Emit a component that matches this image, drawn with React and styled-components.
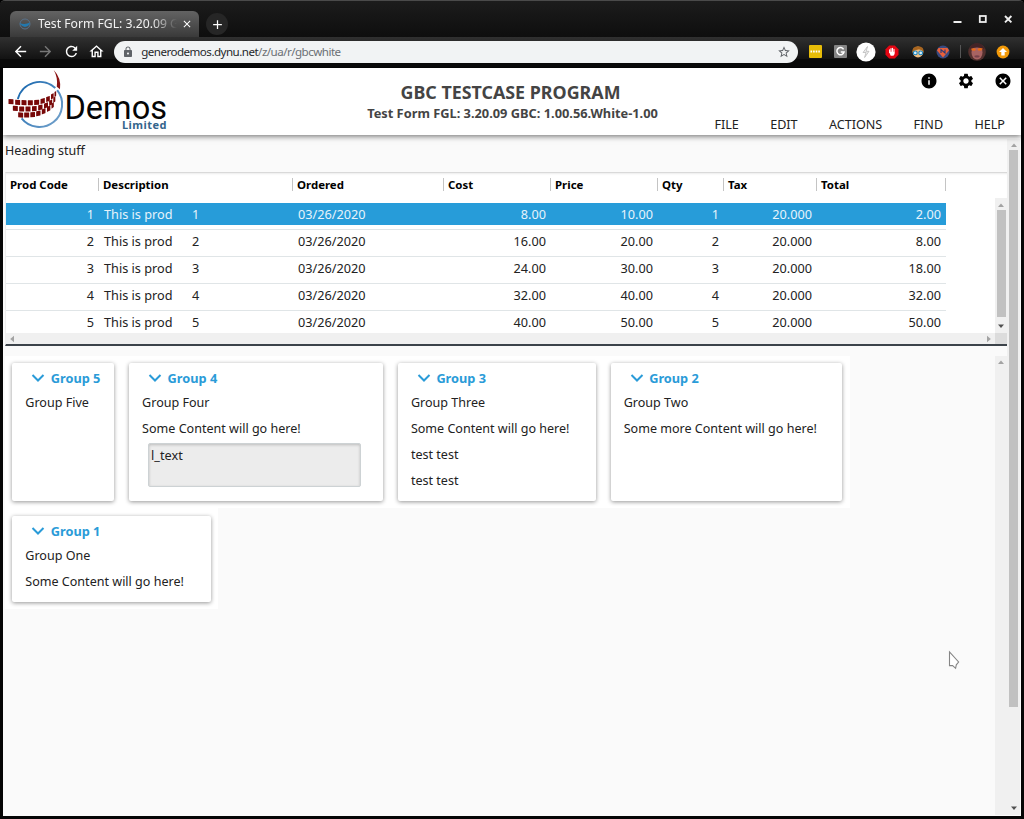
import React from "react";
import styled, { createGlobalStyle, css } from "styled-components";
import {
  MdArrowBack, MdArrowForward, MdRefresh, MdOutlineHome, MdLock, MdStarBorder,
  MdInfo, MdSettings, MdCancel, MdClose, MdAdd,
} from "react-icons/md";

const GlobalStyle = createGlobalStyle`
  * { box-sizing: border-box; }
  html, body { margin: 0; background: #000; overflow: hidden; }
  body { font-family: "Noto Sans", "Open Sans", sans-serif; font-size: 12.7px; color: #222; }
`;

const Window = styled.div`
  width: 1024px;
  height: 819px;
  display: flex;
  flex-direction: column;
  background: #050505;
  border-top: 1px solid #4a4a4a;
  border-radius: 5px 5px 0 0;
  overflow: hidden;
`;

/* ---------- browser frame ---------- */

const TitleBar = styled.div`
  height: 36px;
  flex: none;
  display: flex;
  align-items: flex-end;
  padding: 0 0 0 10px;
  background: linear-gradient(#1c1c1c, #0e0e0e);
`;

const Tab = styled.div`
  width: 189px;
  height: 26px;
  display: flex;
  align-items: center;
  padding: 0 6px 0 8px;
  border-radius: 6px 6px 0 0;
  background: linear-gradient(#636363, #3a3a3a);
`;

const TabTitle = styled.div`
  width: 139px;
  margin-left: 6px;
  overflow: hidden;
  white-space: nowrap;
  font-size: 12.2px;
  line-height: 20px;
  color: #f2f2f2;
  mask-image: linear-gradient(90deg, #000 82%, transparent 100%);
`;

const TabClose = styled(MdClose)`
  margin-left: auto;
  color: #fff;
  font-size: 12px;
`;

const NewTab = styled.div`
  width: 22px;
  height: 22px;
  margin: 0 0 2px 7px;
  border-radius: 50%;
  background: #262626;
  color: #fff;
  display: grid;
  place-items: center;
  font-size: 15px;
`;

const WindowControls = styled.div`
  display: flex;
  align-items: center;
  margin: 0 10px 8px auto;
  gap: 16px;
  height: 20px;
`;

const Toolbar = styled.div`
  height: 30px;
  flex: none;
  display: flex;
  align-items: center;
  padding: 0 12px 1px;
  background: linear-gradient(#303030, #131313 72%, #0a0a0a 74%);
`;

const NavButton = styled.div`
  width: 25.3px;
  height: 22px;
  display: flex;
  align-items: center;
  font-size: 17px;
  color: ${(p) => (p.$dim ? "#777" : "#fff")};
`;

const AddressBar = styled.div`
  width: 684px;
  height: 22px;
  margin-left: 1px;
  padding: 0 7px 0 8px;
  display: flex;
  align-items: center;
  border-radius: 11px;
  background: #f1f3f4;
  color: #5f6368;
  font-size: 12px;
`;

const Url = styled.span`
  margin-left: 7px;
  font-size: 11.6px;
  letter-spacing: -0.53px;
  color: #6b7075;
  b { font-weight: 400; color: #26282b; }
`;

const Star = styled(MdStarBorder)`
  margin-left: auto;
  font-size: 14px;
`;

const Extensions = styled.div`
  flex: 1;
  display: flex;
  align-items: center;
  justify-content: space-between;
  padding: 0 0 0 7px;
  margin-right: -1px;
`;

const ExtSlot = styled.div`
  width: ${(p) => p.$w || 20}px;
  display: grid;
  place-items: center;
`;

/* ---------- page ---------- */

const Page = styled.div`
  flex: 1;
  min-height: 0;
  margin: 1px 3px 3px;
  display: flex;
  flex-direction: column;
  background: #fafafa;
`;

const Header = styled.header`
  height: 67px;
  flex: none;
  display: grid;
  grid-template-columns: 330px 357px 1fr;
  background: #fff;
  position: relative;
  box-shadow: 0 1px 6px rgba(0, 0, 0, 0.6);
`;

const Titles = styled.div`
  text-align: center;
  color: #444;
  font-weight: 700;
  white-space: nowrap;
  padding: 12px 0 0 2px;
`;

const Title = styled.div`
  margin-left: -4px;
  font-size: 17.85px;
  line-height: 24px;
`;

const Subtitle = styled.div`
  font-size: 12.82px;
  line-height: 18px;
`;

const HeaderActions = styled.div`
  display: flex;
  flex-direction: column;
  align-items: flex-end;
  justify-content: space-between;
  padding: 4px 10px 0 0;
`;

const ActionIcons = styled.div`
  display: flex;
  gap: 19px;
  margin-right: -0.5px;
  font-size: 18px;
  color: #000;
  svg { display: block; }
`;

const Menu = styled.nav`
  display: flex;
  gap: 31.3px;
  padding-right: 6px;
  line-height: 20px;
  font-size: 12.6px;
  color: #222;
`;

const Main = styled.div`
  flex: 1;
  min-height: 0;
  display: flex;
`;

const Content = styled.div`
  width: 1004px;
  padding-left: 2px;
  display: flex;
  flex-direction: column;
`;

const Heading = styled.div`
  height: 37px;
  padding-top: 7px;
  line-height: 18px;
  font-size: 12.5px;
`;

/* ---------- table ---------- */

const TableFrame = styled.section`
  height: 174px;
  flex: none;
  display: flex;
  flex-direction: column;
  background: #fff;
  border-top: 1px solid #d9d9d9;
  border-bottom: 2px solid #3c434a;
  border-left: 1px solid #eee;
  box-shadow: inset 0 2px 2px -1px rgba(0, 0, 0, 0.08);
`;

const TableTop = styled.div`
  height: 160px;
  display: flex;
`;

const TableGrid = styled.div`
  width: 989px;
  height: 160px;
  overflow: hidden;
`;

const columns = css`
  display: grid;
  width: 940px;
  grid-template-columns: 93px 194px 151px 107px 107px 66px 93px 129px;
`;

const HeadRow = styled.div`
  ${columns}
  height: 30px;
  padding-top: 5px;
`;

const HeadCell = styled.div`
  height: 13px;
  padding-left: 4px;
  display: flex;
  align-items: center;
  border-right: 1px solid #c4c4c4;
  font-size: 11.45px;
  font-weight: 700;
  color: #000;
`;

const Row = styled.div`
  ${columns}
  height: 27px;
  padding-bottom: 4px;
  border-bottom: 1px solid #e0e5e7;
  line-height: 22px;
  color: ${(p) => (p.$selected ? "#e6f3fb" : "#222")};
`;

const Cell = styled.div`
  height: 22px;
  padding: 0 5px;
  text-align: ${(p) => (p.$right ? "right" : "left")};
  white-space: pre;
  background: ${(p) => (p.$selected ? "#279cd9" : "transparent")};
`;

const ProdNumber = styled.span`
  margin-left: 19.5px;
`;

/* ---------- scrollbars ---------- */

const VTrack = styled.div`
  width: ${(p) => p.$w}px;
  height: ${(p) => p.$h}px;
  flex: none;
  margin-top: ${(p) => p.$top || 0}px;
  display: flex;
  flex-direction: column;
  align-items: center;
  background: #f0f0f0;
  padding: ${(p) => p.$pad || "4px 0"};
`;

const Thumb = styled.div`
  width: 9px;
  height: ${(p) => p.$h}px;
  margin-top: ${(p) => p.$gap}px;
  background: #c1c1c1;
`;

const ArrowSvg = styled.svg`
  display: block;
  flex: none;
  fill: ${(p) => (p.$dark ? "#505050" : "#a3a3a3")};
  margin-top: ${(p) => (p.$end ? "auto" : 0)};
`;

const HTrack = styled.div`
  height: 11px;
  display: flex;
  align-items: center;
  justify-content: space-between;
  padding-left: 3px;
  background: #f0f0f0;
`;

const Corner = styled.div`
  width: 12px;
  height: 11px;
  margin-left: 3px;
  background: #dcdcdc;
`;

const HEnd = styled.div`
  display: flex;
  align-items: center;
`;

/* ---------- groups ---------- */

const Lower = styled.div`
  flex: 1;
  min-height: 0;
  display: flex;
  margin-top: 10px;
`;

const GroupArea = styled.div`
  width: 990px;
  display: flex;
  flex-direction: column;
  align-items: flex-start;
`;

const GroupRow = styled.div`
  display: flex;
  gap: 14.8px;
  height: ${(p) => p.$h}px;
  padding: ${(p) => p.$top}px 7.5px 7px 7.3px;
  background: #fff;
`;

const Card = styled.article`
  width: ${(p) => p.$w}px;
  padding: 6px 0 0 13px;
  background: #fff;
  border-radius: 2px;
  box-shadow: 0 1px 4px rgba(0, 0, 0, 0.42);
`;

const CardTitle = styled.div`
  height: 17px;
  padding-left: 6px;
  display: flex;
  align-items: center;
  gap: 5.5px;
  font-weight: 700;
  font-size: 12.75px;
  color: #2a9bd8;
`;

const Line = styled.div`
  height: 26px;
  line-height: 26px;
  font-size: 12.55px;
  margin-top: ${(p) => (p.$first ? "4px" : 0)};
`;

const TextArea = styled.div`
  width: 213px;
  height: 44px;
  margin: 1px 0 0 6px;
  padding: 2px;
  line-height: 18px;
  background: #ececec;
  border: 1px solid #cdd2d4;
  border-radius: 2px;
  box-shadow: inset 0 1px 3px rgba(0, 0, 0, 0.2);
`;

const Pointer = styled.svg`
  position: absolute;
  left: 947px;
  top: 650px;
`;

const Arrow = ({ dir, dark, end }) => {
  const d = { up: "M1 5 L4 1.5 L7 5Z", down: "M1 1.5 L7 1.5 L4 5Z" }[dir];
  const h = { left: "M5 0.8 L5 7.2 L1.2 4Z", right: "M1 0.8 L1 7.2 L4.8 4Z" }[dir];
  return d ? (
    <ArrowSvg width="8" height="6" $dark={dark} $end={end}><path d={d} /></ArrowSvg>
  ) : (
    <ArrowSvg width="6" height="8" $dark={dark}><path d={h} /></ArrowSvg>
  );
};

const tiles = [
  [33, 107, 15, 3], [53, 109, 15, 4], [72, 110, 15, 2], [91, 110, 15, 0], [110, 109, 15, -5], [128, 105, 13, -12], [144, 99, 11, -20], [157, 91, 8, -28], [166, 84, 5, -34],
  [46, 127, 15, 4], [65, 129, 15, 3], [84, 129, 15, 0], [103, 128, 14, -5], [121, 124, 13, -12], [138, 118, 12, -20], [152, 110, 9, -28], [163, 101, 6, -34],
  [62, 147, 15, 4], [80, 147, 15, 0], [98, 146, 14, -4], [115, 142, 13, -12], [131, 136, 11, -20], [146, 128, 10, -28], [158, 118, 7, -34],
];

const LogoSvg = styled.svg`display: block;`;

const Logo = () => (
  <LogoSvg width="180" height="67" viewBox="3 68 180 67">
    <defs>
      <linearGradient id="ring" x1="0" y1="0" x2="1" y2="0.8">
        <stop offset="0" stopColor="#1565ad" />
        <stop offset="1" stopColor="#6f9fca" />
      </linearGradient>
    </defs>
    <path d="M17.8 99 A22.7 22.7 0 0 1 55.3 88.1 M57.2 90.1 A22.7 22.7 0 1 1 21.6 118.4"
      fill="none" stroke="url(#ring)" strokeWidth="2" />
    <path d="M53.7 70 Q61.5 78 60 89.3 L56.8 86.7 Q58.2 78 53.7 70Z" fill="#8b1414" />
    <g transform="translate(0 66) scale(0.3333)" fill="#780808">
      {tiles.map(([x, y, s, a]) => (
        <rect key={`${x}-${y}`} x={-s / 2} y={-7.5} width={s} height="15" rx="1"
          transform={`translate(${x} ${y}) skewY(${a})`} />
      ))}
    </g>
    <text x="64.5" y="118.5" fontFamily="Roboto, sans-serif" fontSize="32.5" textLength="102.5" fill="#050505">Demos</text>
    <text x="122" y="128.5" fontFamily="Noto Sans, sans-serif" fontWeight="700" fontSize="11" textLength="44.5" fill="#34658c">Limited</text>
  </LogoSvg>
);

const Controls = () => (
  <WindowControls>
    <svg width="64" height="20" viewBox="950 9 64 20" stroke="#eee" fill="none">
      <path d="M953.5 22H961.5" strokeWidth="1.8" />
      <rect x="979.8" y="16" width="6" height="6" strokeWidth="1.8" />
      <path d="M1005 16L1011.4 22.4M1011.4 16L1005 22.4" strokeWidth="1.9" />
    </svg>
  </WindowControls>
);

const ExtensionIcons = () => (
  <Extensions>
    <ExtSlot><svg width="13" height="13"><rect width="13" height="13" rx="1" fill="#e8bd08" /><path d="M1.5 6.5H11" stroke="#fff" strokeWidth="2" strokeDasharray="1.6 1" /></svg></ExtSlot>
    <ExtSlot><svg width="13" height="13"><rect width="13" height="13" rx="1" fill="#858585" /><path d="M9.6 4.3A3.6 3.6 0 1 0 10 7H6.8" stroke="#fff" strokeWidth="1.5" fill="none" /></svg></ExtSlot>
    <ExtSlot><svg width="20" height="20"><circle cx="10" cy="10" r="9.6" fill="#fff" /><path d="M11.5 4.5L7 10.5H10L8.6 15.5L13 9.3H10.2Z" fill="#eee" stroke="#bbb" strokeWidth="0.8" /></svg></ExtSlot>
    <ExtSlot><svg width="14" height="14"><path d="M4.2 0.5H9.8L13.5 4.2V9.8L9.8 13.5H4.2L0.5 9.8V4.2Z" fill="#e30613" /><path d="M4.6 7.5V4.8M6 7V3.5M7.5 7V3.2M9 7V4.4" stroke="#fff" strokeWidth="1.1" strokeLinecap="round" /><path d="M4 6.8H9.6V9L8.5 10.8H5.7Z" fill="#fff" /></svg></ExtSlot>
    <ExtSlot><svg width="12" height="12"><circle cx="6" cy="6" r="5.4" fill="#efbd80" /><path d="M0.3 6.5Q0 0.3 6 0.3Q12 0.3 11.7 6.5Q10 3.2 7 3.4Q3 3.2 0.3 6.5Z" fill="#a8651f" /><circle cx="3.3" cy="6.9" r="1.9" fill="#d5f0fc" stroke="#1783c0" strokeWidth="1.1" /><circle cx="8.7" cy="6.9" r="1.9" fill="#d5f0fc" stroke="#1783c0" strokeWidth="1.1" /></svg></ExtSlot>
    <ExtSlot><svg width="14" height="14"><circle cx="7" cy="7" r="6.5" fill="#394a80" /><path d="M2.5 3H11.5L13 5.5L7 12.5L1 5.5Z" fill="#e8603a" /><path d="M5 8V4.6L9 8V4.6" stroke="#263b7b" strokeWidth="1.1" fill="none" /></svg></ExtSlot>
    <ExtSlot $w={3}><svg width="1" height="13"><rect width="1" height="13" fill="#555" /></svg></ExtSlot>
    <ExtSlot>
      <svg width="18" height="18"><circle cx="9" cy="9" r="8.8" fill="#53302e" /><ellipse cx="9" cy="9.5" rx="5.5" ry="7" fill="#a86362" /><path d="M1.5 6Q3 0.3 9 0.3Q15 0.3 16.5 6Q9 3 1.5 6Z" fill="#432326" /><path d="M3 5.8Q5.5 4.4 8 6L7 7.8L4 7.6ZM9.4 6Q12 4 14.8 5.6L13.5 7.6L10.5 7.8Z" fill="#e86a18" /><path d="M6 13Q9 11.5 12 13L10.5 14.5H7.5Z" fill="#77424a" /></svg>
    </ExtSlot>
    <ExtSlot><svg width="14" height="14"><circle cx="7" cy="7" r="6.4" fill="#f39a08" /><path d="M7 3L11 7H8.7V10.4H5.3V7H3Z" fill="#fff" /></svg></ExtSlot>
  </Extensions>
);

const heads = ["Prod Code", "Description", "Ordered", "Cost", "Price", "Qty", "Tax", "Total"];
const rows = [
  ["1", "8.00", "10.00", "2.00"],
  ["2", "16.00", "20.00", "8.00"],
  ["3", "24.00", "30.00", "18.00"],
  ["4", "32.00", "40.00", "32.00"],
  ["5", "40.00", "50.00", "50.00"],
];

const ProductRow = ({ data, selected }) => {
  const [n, cost, price, total] = data;
  return (
    <Row $selected={selected}>
      <Cell $right $selected={selected}>{n}</Cell>
      <Cell $selected={selected}>This is prod<ProdNumber>{n}</ProdNumber></Cell>
      <Cell $selected={selected}>03/26/2020</Cell>
      {[cost, price, n, "20.000", total].map((v, i) => (
        <Cell key={i} $right $selected={selected}>{v}</Cell>
      ))}
    </Row>
  );
};

const Group = ({ width, title, lines, field }) => (
  <Card $w={width}>
    <CardTitle>
      <svg width="14" height="10" viewBox="0 0 14 10"><path d="M1.5 2L7 7.5L12.5 2" fill="none" stroke="#2a9bd8" strokeWidth="2" /></svg>
      {title}
    </CardTitle>
    {lines.map((l, i) => <Line key={i} $first={i === 0}>{l}</Line>)}
    {field && <TextArea>{field}</TextArea>}
  </Card>
);

export default function App() {
  return (
    <>
      <GlobalStyle />
      <Window>
        <TitleBar>
          <Tab>
            <svg width="14" height="14"><circle cx="7" cy="7" r="5" fill="none" stroke="#58718a" strokeWidth="1" /><path d="M1.5 6Q7 8 12 5.5Q11 9.5 7 10Q3.5 9.5 1.5 6Z" fill="#2378ad" /></svg>
            <TabTitle>Test Form FGL: 3.20.09 GBC</TabTitle>
            <TabClose />
          </Tab>
          <NewTab><MdAdd /></NewTab>
          <Controls />
        </TitleBar>
        <Toolbar>
          <NavButton><MdArrowBack /></NavButton>
          <NavButton $dim><MdArrowForward /></NavButton>
          <NavButton><MdRefresh /></NavButton>
          <NavButton><MdOutlineHome /></NavButton>
          <AddressBar>
            <MdLock />
            <Url><b>generodemos.dynu.net</b>/z/ua/r/gbcwhite</Url>
            <Star />
          </AddressBar>
          <ExtensionIcons />
        </Toolbar>
        <Page>
          <Header>
            <Logo />
            <Titles>
              <Title>GBC TESTCASE PROGRAM</Title>
              <Subtitle>Test Form FGL: 3.20.09 GBC: 1.00.56.White-1.00</Subtitle>
            </Titles>
            <HeaderActions>
              <ActionIcons><MdInfo /><MdSettings /><MdCancel /></ActionIcons>
              <Menu>
                {["FILE", "EDIT", "ACTIONS", "FIND", "HELP"].map((m) => <span key={m}>{m}</span>)}
              </Menu>
            </HeaderActions>
          </Header>
          <Main>
            <Content>
              <Heading>Heading stuff</Heading>
              <TableFrame>
                <TableTop>
                  <TableGrid>
                    <HeadRow>{heads.map((h) => <HeadCell key={h}>{h}</HeadCell>)}</HeadRow>
                    {rows.map((r, i) => <ProductRow key={r[0]} data={r} selected={i === 0} />)}
                  </TableGrid>
                  <VTrack $w={12} $h={135} $top={25} $pad="4px 0">
                    <Arrow dir="up" />
                    <Thumb $h={107} $gap={2} />
                    <Arrow dir="down" dark end />
                  </VTrack>
                </TableTop>
                <HTrack>
                  <Arrow dir="left" />
                  <HEnd><Arrow dir="right" /><Corner /></HEnd>
                </HTrack>
              </TableFrame>
              <Lower>
                <GroupArea>
                  <GroupRow $h={152} $top={7}>
                    <Group width={102} title="Group 5" lines={["Group Five"]} />
                    <Group width={254} title="Group 4" lines={["Group Four", "Some Content will go here!"]} field="l_text" />
                    <Group width={198} title="Group 3" lines={["Group Three", "Some Content will go here!", "test test", "test test"]} />
                    <Group width={231.5} title="Group 2" lines={["Group Two", "Some more Content will go here!"]} />
                  </GroupRow>
                  <GroupRow $h={101} $top={8}>
                    <Group width={198.5} title="Group 1" lines={["Group One", "Some Content will go here!"]} />
                  </GroupRow>
                </GroupArea>
                <VTrack $w={12} $h={459} $pad="3px 0">
                  <Arrow dir="up" />
                </VTrack>
              </Lower>
            </Content>
            <VTrack $w={13} $h={676} $top={4} $pad="3px 0 4px">
              <Arrow dir="up" />
              <Thumb $h={557} $gap={2} />
              <Arrow dir="down" dark end />
            </VTrack>
          </Main>
        </Page>
      </Window>
      <Pointer width="14" height="20" viewBox="0 0 14 20">
        <path d="M2.5 2L2.5 15.6L5.6 15.6L8.6 18.3L9.3 14.8L11.6 12Z" fill="#fff" stroke="#858585" strokeWidth="1.1" />
      </Pointer>
    </>
  );
}
